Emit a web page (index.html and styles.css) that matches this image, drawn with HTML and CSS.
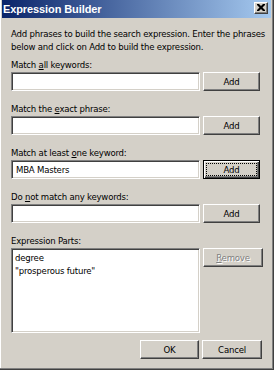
FILE: index.html
```html
<!DOCTYPE html>
<html>
<head>
<meta charset="utf-8">
<link rel="stylesheet" href="styles.css">
</head>
<body>
<div class="window">
  <div class="titlebar">
    <span class="title">Expression Builder</span>
    <span class="close"><svg width="8" height="7" viewBox="0 0 8 7"><path d="M0 0h2l2 2 2-2h2v1l-2.5 2.5 2.5 2.5v1h-2l-2-2-2 2h-2v-1l2.5-2.5-2.5-2.5z" fill="#000"/></svg></span>
  </div>
  <div class="content">
    <p class="intro">Add phrases to build the search expression. Enter the phrases below and click on Add to build the expression.</p>
    <div class="field">
      <div class="label">Match <u>a</u>ll keywords:</div>
      <div class="row"><div class="input"></div><div class="btn">Add</div></div>
    </div>
    <div class="field">
      <div class="label">Match the <u>e</u>xact phrase:</div>
      <div class="row"><div class="input"></div><div class="btn">Add</div></div>
    </div>
    <div class="field">
      <div class="label">Match at least <u>o</u>ne keyword:</div>
      <div class="row"><div class="input">MBA Masters</div><div class="btn default"><span class="focus">Add</span></div></div>
    </div>
    <div class="field">
      <div class="label">Do <u>n</u>ot match any keywords:</div>
      <div class="row"><div class="input"></div><div class="btn">Add</div></div>
    </div>
    <div class="field parts">
      <div class="label">Expression Parts:</div>
      <div class="row top">
        <div class="input list"><div>degree</div><div>"prosperous future"</div></div>
        <div class="btn wide disabled"><span><u>R</u>emove</span></div>
      </div>
    </div>
    <div class="footer">
      <div class="btn ok">OK</div>
      <div class="btn wide">Cancel</div>
    </div>
  </div>
</div>
</body>
</html>
```

FILE: styles.css
```css
* { box-sizing: border-box; }
html, body { margin: 0; padding: 0; }
body {
  width: 274px;
  height: 370px;
  overflow: hidden;
  background: #d4d0c8;
  font-family: "DejaVu Sans Condensed", "Liberation Sans", Arial, sans-serif;
  font-stretch: condensed;
  font-size: 9.5px;
  letter-spacing: -0.2px;
  color: #000;
}
.window {
  width: 274px;
  height: 370px;
  background: #d4d0c8;
  border-right: 1px solid #404040;
  border-bottom: 1px solid #404040;
  box-shadow: inset -1px -1px 0 #808080, inset 1px 0 0 #ffffff;
  display: flex;
  flex-direction: column;
  padding: 0 2px 2px 2px;
}
.titlebar {
  height: 18px;
  background: linear-gradient(to right, #0a246a, #a6caf0);
  display: flex;
  align-items: center;
  justify-content: space-between;
  padding: 0 3px 0 1px;
  flex: none;
}
.title {
  color: #fff;
  font-family: "Liberation Sans", Arial, sans-serif;
  font-stretch: normal;
  font-weight: bold;
  font-size: 11px;
  letter-spacing: -0.1px;
}
.close {
  width: 14px;
  height: 12px;
  background: #d4d0c8;
  border-top: 1px solid #ffffff;
  border-left: 1px solid #ffffff;
  border-right: 1px solid #404040;
  border-bottom: 1px solid #404040;
  box-shadow: inset -1px -1px 0 #808080;
  display: flex;
  align-items: center;
  justify-content: center;
  padding-bottom: 1px;
  margin-top: -2px;
}
.close svg { display: block; }
.content {
  flex: 1;
  display: flex;
  flex-direction: column;
  padding: 9px 0 0 9px;
}
.intro {
  margin: 0 0 5px 0;
  line-height: 13px;
  width: 262px;
}
.field {
  display: flex;
  flex-direction: column;
  gap: 1px;
  margin-bottom: 11px;
}
.field.parts { margin-bottom: 0; }
.label { line-height: 13px; }
.row {
  display: flex;
  gap: 3px;
  align-items: stretch;
}
.row.top { align-items: flex-start; }
.input {
  width: 189px;
  height: 19px;
  background: #fff;
  border-top: 1px solid #808080;
  border-left: 1px solid #808080;
  border-right: 1px solid #ffffff;
  border-bottom: 1px solid #ffffff;
  box-shadow: inset 1px 1px 0 #404040, inset -1px -1px 0 #d4d0c8;
  padding: 2px 4px;
  line-height: 13px;
}
.list {
  height: 85px;
  padding: 2px 3px;
}
.btn {
  width: 57px;
  height: 19px;
  background: #d4d0c8;
  border-top: 1px solid #ffffff;
  border-left: 1px solid #ffffff;
  border-right: 1px solid #404040;
  border-bottom: 1px solid #404040;
  box-shadow: inset -1px -1px 0 #808080;
  display: flex;
  align-items: center;
  justify-content: center;
  line-height: 13px;
}
.btn.wide { width: 60px; }
.btn.default {
  border: 1px solid #000;
  box-shadow: inset 1px 1px 0 #ffffff, inset -1px -1px 0 #404040, inset -2px -2px 0 #808080;
  padding: 2px;
}
.btn .focus {
  width: 100%;
  height: 100%;
  border: 1px dotted #000;
  display: flex;
  align-items: center;
  justify-content: center;
}
.btn.disabled span {
  color: #808080;
  text-shadow: 1px 1px 0 #ffffff;
}
.footer {
  display: flex;
  justify-content: flex-end;
  gap: 3px;
  padding-right: 9px;
  margin-top: 7px;
}
.btn.ok { width: 59px; }
```
